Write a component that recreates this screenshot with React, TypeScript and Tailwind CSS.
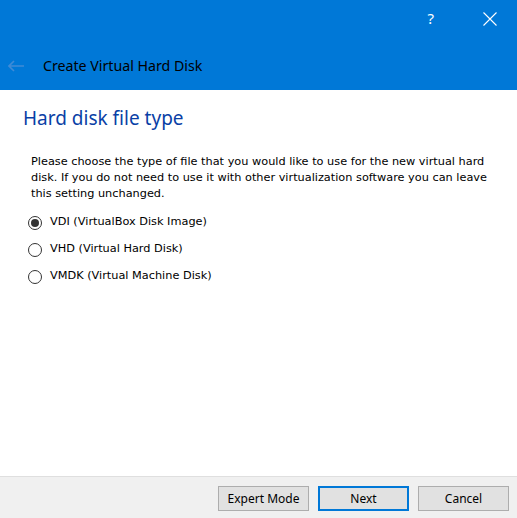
import React from "react";

const Radio = ({ checked, label }: { checked?: boolean; label: string }) => (
  <div className="flex items-center h-[27px]">
    <div className="w-[14px] h-[14px] rounded-full border border-[#333333] bg-white flex items-center justify-center ml-[28px]">
      {checked && <div className="w-[8px] h-[8px] rounded-full bg-[#333333]" />}
    </div>
    <span className="ml-[8px] text-black">{label}</span>
  </div>
);

export default function App() {
  return (
    <div className="w-[517px] h-[518px] flex flex-col bg-white overflow-hidden">
      <div className="h-[90px] bg-[#0078d7] flex flex-col shrink-0">
        <div className="h-[37px] flex items-center justify-end pr-[20px]" style={{ fontFamily: '"Noto Sans", sans-serif' }}>
          <span className="text-white text-[15px] leading-none mr-[49px]">?</span>
          <svg width="14" height="14" viewBox="0 0 14 14">
            <path d="M0.5 0.5 L13.5 13.5 M13.5 0.5 L0.5 13.5" stroke="white" strokeWidth="1.1" fill="none" />
          </svg>
        </div>
        <div className="flex items-center h-[30px] mt-[14px]">
          <svg width="16" height="12" viewBox="0 0 16 12" className="ml-[8px]">
            <path d="M1 6 H16 M6 1 L1 6 L6 11" stroke="#3f8bd6" strokeWidth="1.6" fill="none" />
          </svg>
          <span className="ml-[19px] text-[14.2px] text-black" style={{ fontFamily: '"Noto Sans", sans-serif' }}>
            Create Virtual Hard Disk
          </span>
        </div>
      </div>
      <div className="flex-1 flex flex-col">
        <div className="pl-[23px] pt-[14px] text-[19px] leading-[28px] text-[#0a3fa6]" style={{ fontFamily: '"Noto Sans", sans-serif' }}>
          Hard disk file type
        </div>
        <div className="flex flex-col" style={{ fontFamily: '"DejaVu Sans", sans-serif' }}>
          <div className="pl-[31px] pt-[22px] text-[11.3px] leading-[16px] text-black">
            Please choose the type of file that you would like to use for the new virtual hard
            <br />
            disk. If you do not need to use it with other virtualization software you can leave
            <br />
            this setting unchanged.
          </div>
          <div className="mt-[7px] flex flex-col text-[11.3px]">
            <Radio checked label="VDI (VirtualBox Disk Image)" />
            <Radio label="VHD (Virtual Hard Disk)" />
            <Radio label="VMDK (Virtual Machine Disk)" />
          </div>
        </div>
      </div>
      <div className="h-[42px] shrink-0 border-t border-[#dfdfdf] bg-[#f0f0f0] flex items-start justify-end pr-[8px] pt-[9px] gap-[9px] text-[12px]" style={{ fontFamily: '"Noto Sans", sans-serif' }}>
        <button className="w-[91px] h-[25px] bg-[#e1e1e1] border border-[#adadad] text-black">Expert Mode</button>
        <button className="w-[91px] h-[25px] bg-[#e1e1e1] border-2 border-[#0078d7] text-black">Next</button>
        <button className="w-[91px] h-[25px] bg-[#e1e1e1] border border-[#adadad] text-black">Cancel</button>
      </div>
    </div>
  );
}
